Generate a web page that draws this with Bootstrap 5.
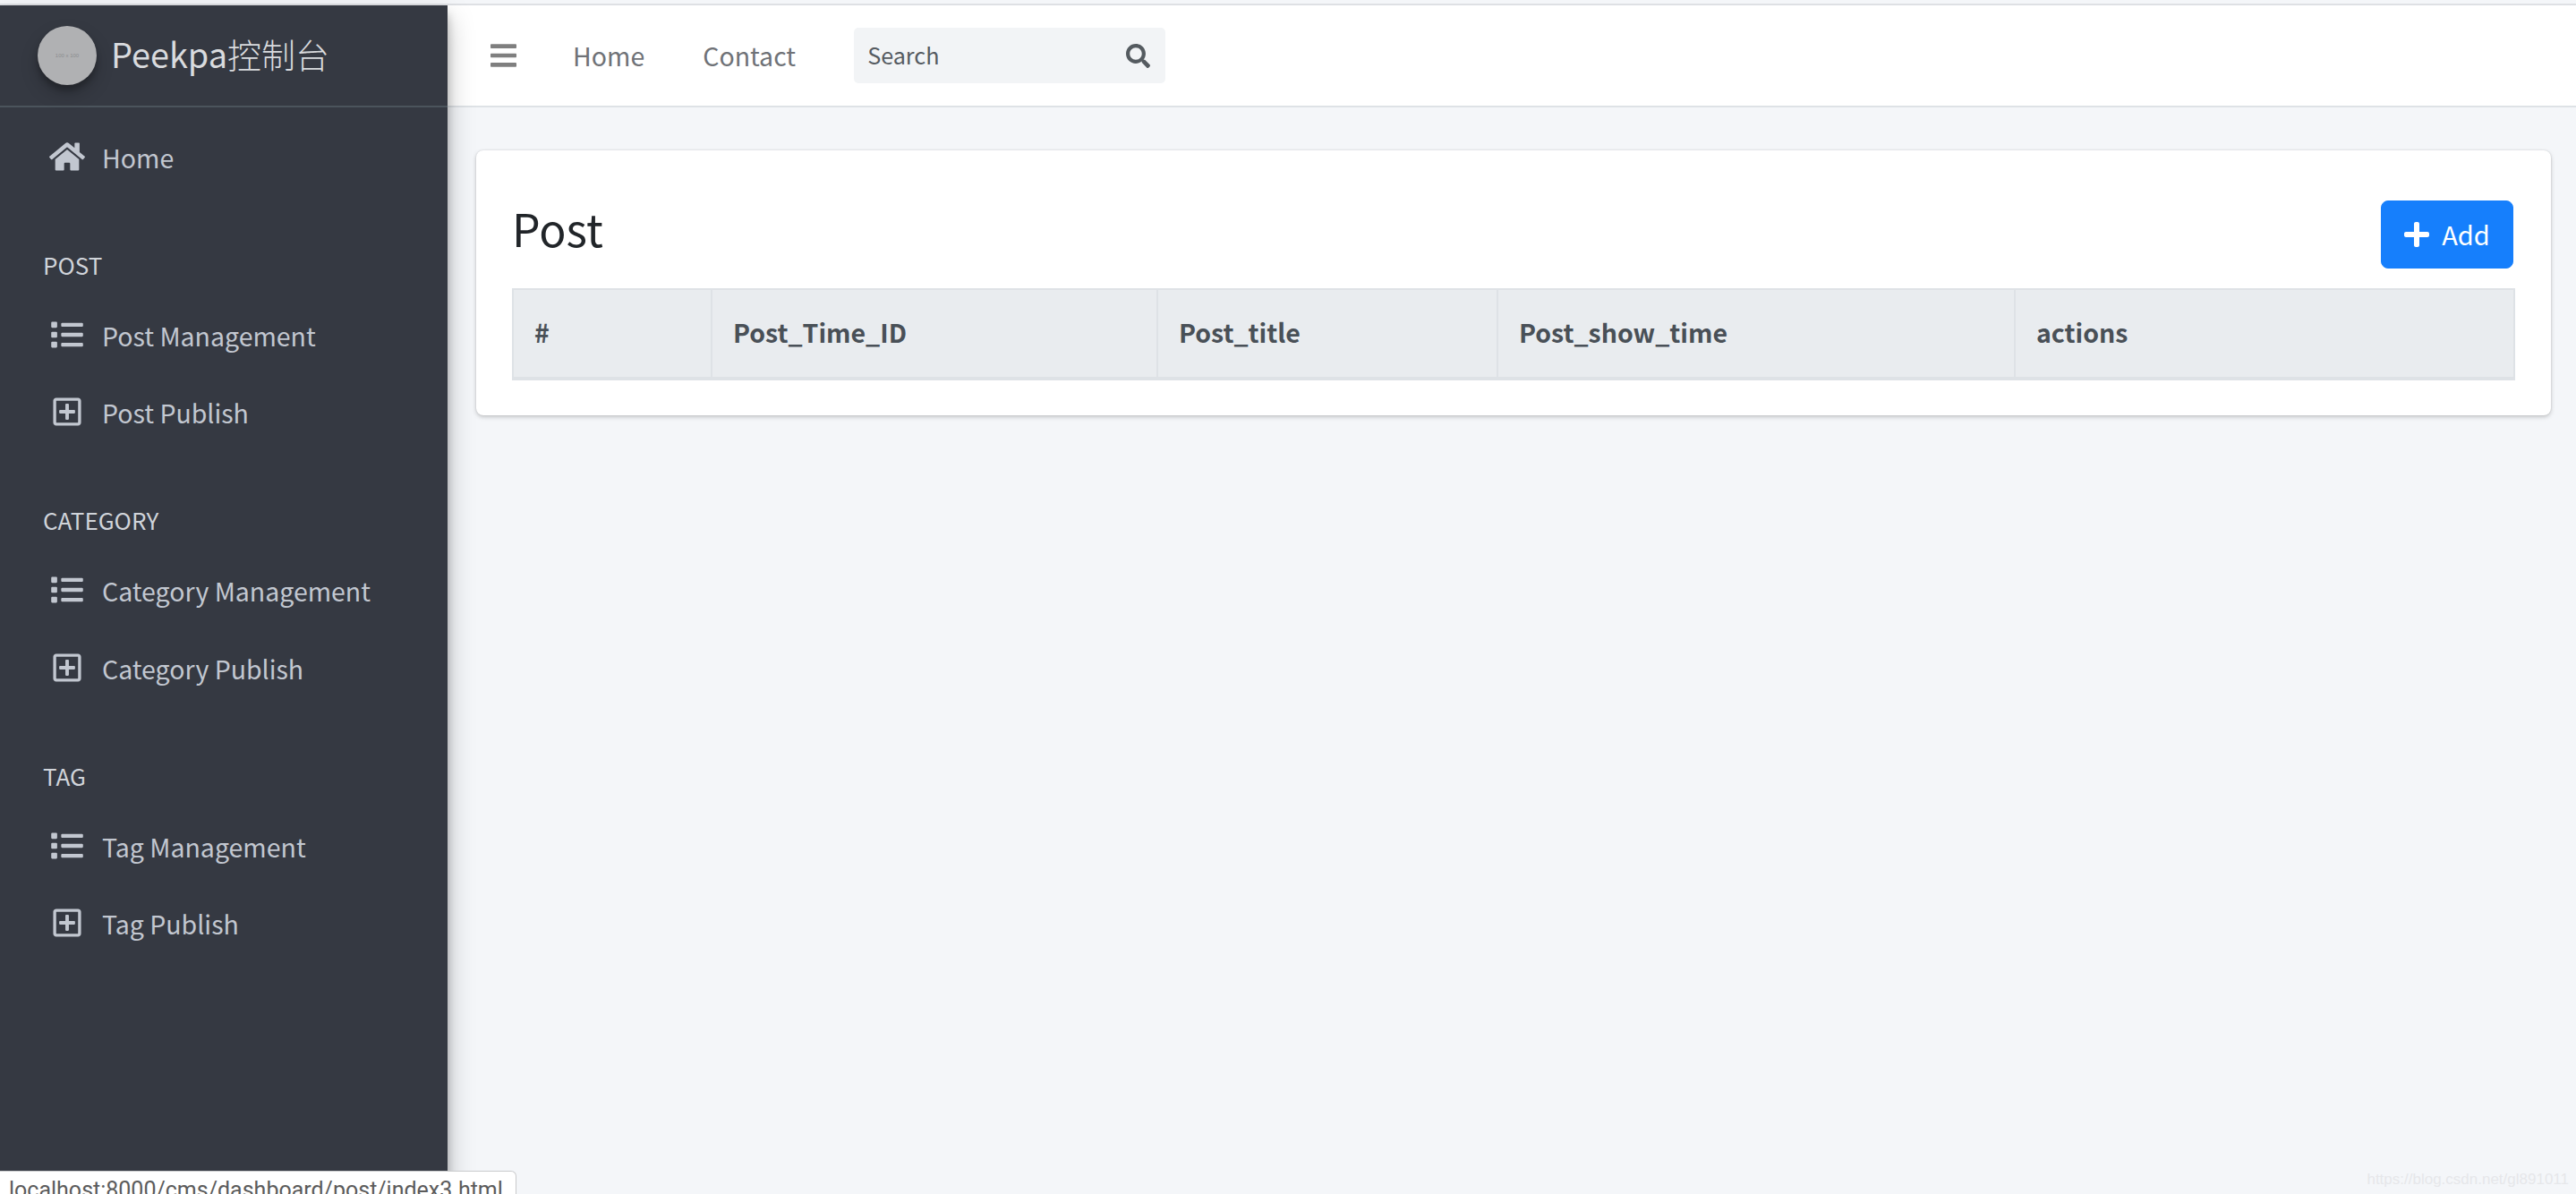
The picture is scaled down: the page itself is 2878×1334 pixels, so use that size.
<!DOCTYPE html>
<html lang="en">
<head>
<meta charset="utf-8">
<title>Peekpa</title>
<link href="https://cdn.jsdelivr.net/npm/bootstrap@5.3.0/dist/css/bootstrap.min.css" rel="stylesheet">
<style>
html,body{height:1334px;overflow:hidden}
body{font-family:"Noto Sans CJK SC","Noto Sans",sans-serif;font-size:28.5px;background:#f4f6f9;color:#212529;position:relative;padding-top:4px}
.app-shell{height:1330px;border-top:2px solid #dee0e4}
.side-panel{width:500px;background:#353942;color:#c2c7d0;box-shadow:0 14px 28px rgba(0,0,0,.25),0 10px 10px rgba(0,0,0,.22);z-index:2;flex:none}
.brand-row{height:114px;border-bottom:2px solid #4b545c;padding-left:42px;color:#d9dbde;font-size:37.9px;gap:16px}
.brand-name{margin-bottom:3px}
.brand-cjk{font-weight:300}
.avatar-disc{width:66px;height:66px;border-radius:50%;background:#b0b1b3;color:#8c8d8f;font-size:6px;font-family:"Liberation Sans",sans-serif;box-shadow:0 10px 20px rgba(0,0,0,.19),0 6px 6px rgba(0,0,0,.23)}
.side-nav{padding-top:13px}
.side-link{height:86.5px;padding:0 0 0 55px;color:#c2c7d0;font-size:28.5px}
.side-link:hover{color:#c2c7d0}
.side-ico{width:40px;height:40px;margin-right:19px;margin-bottom:3px;fill:#c2c7d0;flex:none}
.side-label{height:71px;padding:0 0 3px 48px;color:#d0d4da;font-size:26px;margin-top:41.5px}
.top-bar{height:114px;background:#fff;border-bottom:2px solid #dee2e6;padding-left:48px}
.burger{width:29px;height:34px;fill:#7f7f7f;margin-right:63px}
.top-link{color:#6f7277;font-size:28.5px;margin-right:65px}
.search-box{width:348px;height:62px;background:#f2f4f6;border-radius:5px;padding:0 17px 0 15px;font-size:25.2px;color:#555b61}
.search-ico{width:27px;height:27px;fill:#555b60}
.content-pad{padding:48px 28px 0 32px}
.post-card{height:296px;border-radius:8px;border:0;box-shadow:0 0 2px rgba(0,0,0,.13),0 2px 5px rgba(0,0,0,.2);padding:56px 40px 0}
.post-head{height:98px;padding-bottom:22px}
.post-title{font-size:50px;font-weight:400;margin:0 0 21px;line-height:1;color:#212529}
.add-btn{width:148px;height:76px;font-size:29px;background:#167ffc;border-color:#167ffc;border-radius:8px;gap:14px;padding:0;margin-right:2px}
.add-ico{width:28px;height:32px;fill:#fff}
.data-table{width:2238px;table-layout:fixed;border-color:#dee2e6;margin:0}
.data-table th{background:#e9ecef;color:#495057;font-size:28.5px;font-weight:700;height:100px;padding:0 0 2px 23px;border:2px solid #dee2e6;border-bottom-width:4px;vertical-align:middle;box-shadow:none}
.status-tip{position:absolute;left:0;bottom:-24px;width:577px;height:50px;background:#fff;border:1px solid #c9cacc;border-left:0;border-radius:0 6px 0 0;z-index:3;font-family:Roboto,sans-serif;font-size:25px;color:#5c5c5c;padding-left:10px;line-height:41px;white-space:nowrap}
.mark-text{position:absolute;right:8px;bottom:4px;font-family:"Liberation Sans",sans-serif;font-size:17px;color:#e6e7ea}
</style>
</head>
<body>
<div class="app-shell d-flex">
  <aside class="side-panel d-flex flex-column">
    <div class="brand-row d-flex align-items-center">
      <span class="avatar-disc d-flex align-items-center justify-content-center">100 x 100</span>
      <span class="brand-name">Peekpa<span class="brand-cjk">控制台</span></span>
    </div>
    <nav class="side-nav nav flex-column">
      <a class="side-link nav-link d-flex align-items-center" href="#"><svg class="side-ico" viewBox="0 0 576 512"><path d="M280.37 148.26L96 300.11V464a16 16 0 0 0 16 16l112.06-.29a16 16 0 0 0 15.92-16V368a16 16 0 0 1 16-16h64a16 16 0 0 1 16 16v95.64a16 16 0 0 0 16 16.05L464 480a16 16 0 0 0 16-16V300L295.67 148.26a12.19 12.19 0 0 0-15.3 0zM571.6 251.47L488 182.56V44.05a12 12 0 0 0-12-12h-56a12 12 0 0 0-12 12v72.61L318.47 43a48 48 0 0 0-61 0L4.34 251.47a12 12 0 0 0-1.6 16.9l25.5 31A12 12 0 0 0 45.15 301l235.22-193.74a12.19 12.19 0 0 1 15.3 0L530.9 301a12 12 0 0 0 16.9-1.6l25.5-31a12 12 0 0 0-1.7-16.93z"/></svg>Home</a>

      <div class="side-label d-flex align-items-center">POST</div>
      <a class="side-link nav-link d-flex align-items-center" href="#"><svg class="side-ico" viewBox="-32 -32 576 576"><use href="#i-list"/></svg>Post Management</a>
      <a class="side-link nav-link d-flex align-items-center" href="#"><svg class="side-ico" viewBox="-32 -32 576 576"><use href="#i-plus"/></svg>Post Publish</a>

      <div class="side-label d-flex align-items-center">CATEGORY</div>
      <a class="side-link nav-link d-flex align-items-center" href="#"><svg class="side-ico" viewBox="-32 -32 576 576"><use href="#i-list"/></svg>Category Management</a>
      <a class="side-link nav-link d-flex align-items-center" href="#"><svg class="side-ico" viewBox="-32 -32 576 576"><use href="#i-plus"/></svg>Category Publish</a>

      <div class="side-label d-flex align-items-center">TAG</div>
      <a class="side-link nav-link d-flex align-items-center" href="#"><svg class="side-ico" viewBox="-32 -32 576 576"><use href="#i-list"/></svg>Tag Management</a>
      <a class="side-link nav-link d-flex align-items-center" href="#"><svg class="side-ico" viewBox="-32 -32 576 576"><use href="#i-plus"/></svg>Tag Publish</a>
    </nav>
  </aside>
  <div class="flex-grow-1 d-flex flex-column">
    <header class="top-bar d-flex align-items-center">
      <svg class="burger" viewBox="0 0 448 512"><path d="M16 132h416c8.837 0 16-7.163 16-16V76c0-8.837-7.163-16-16-16H16C7.163 60 0 67.163 0 76v40c0 8.837 7.163 16 16 16zm0 160h416c8.837 0 16-7.163 16-16v-40c0-8.837-7.163-16-16-16H16c-8.837 0-16 7.163-16 16v40c0 8.837 7.163 16 16 16zm0 160h416c8.837 0 16-7.163 16-16v-40c0-8.837-7.163-16-16-16H16c-8.837 0-16 7.163-16 16v40c0 8.837 7.163 16 16 16z"/></svg>
      <span class="top-link">Home</span>
      <span class="top-link">Contact</span>
      <div class="search-box d-flex align-items-center justify-content-between">
        <span>Search</span>
        <svg class="search-ico" viewBox="0 0 512 512"><path d="M505 442.7L405.3 343c-4.5-4.5-10.6-7-17-7H372c27.6-35.3 44-79.7 44-128C416 93.1 322.9 0 208 0S0 93.1 0 208s93.1 208 208 208c48.3 0 92.7-16.4 128-44v16.3c0 6.4 2.5 12.5 7 17l99.7 99.7c9.4 9.4 24.6 9.4 33.9 0l28.3-28.3c9.4-9.4 9.4-24.6.1-34zM208 336c-70.7 0-128-57.2-128-128 0-70.7 57.2-128 128-128 70.7 0 128 57.2 128 128 0 70.7-57.2 128-128 128z"/></svg>
      </div>
    </header>
    <main class="content-pad">
      <div class="post-card card">
        <div class="post-head d-flex justify-content-between align-items-end">
          <h1 class="post-title">Post</h1>
          <button class="add-btn btn btn-primary d-flex align-items-center justify-content-center"><svg class="add-ico" viewBox="0 0 448 512"><path d="M416 208H272V64c0-17.67-14.33-32-32-32h-32c-17.67 0-32 14.33-32 32v144H32c-17.67 0-32 14.33-32 32v32c0 17.67 14.33 32 32 32h144v144c0 17.67 14.33 32 32 32h32c17.67 0 32-14.33 32-32V304h144c17.67 0 32-14.33 32-32v-32c0-17.67-14.33-32-32-32z"/></svg>Add</button>
        </div>
        <table class="data-table table table-bordered">
          <colgroup><col style="width:222px"><col style="width:498px"><col style="width:380px"><col style="width:578px"><col></colgroup>
          <thead><tr><th>#</th><th>Post_Time_ID</th><th>Post_title</th><th>Post_show_time</th><th>actions</th></tr></thead>
        </table>
      </div>
    </main>
  </div>
</div>
<svg class="d-none"><defs>
<path id="i-list" d="M80 368H16a16 16 0 0 0-16 16v64a16 16 0 0 0 16 16h64a16 16 0 0 0 16-16v-64a16 16 0 0 0-16-16zm0-320H16A16 16 0 0 0 0 64v64a16 16 0 0 0 16 16h64a16 16 0 0 0 16-16V64a16 16 0 0 0-16-16zm0 160H16a16 16 0 0 0-16 16v64a16 16 0 0 0 16 16h64a16 16 0 0 0 16-16v-64a16 16 0 0 0-16-16zm416 176H176a16 16 0 0 0-16 16v32a16 16 0 0 0 16 16h320a16 16 0 0 0 16-16v-32a16 16 0 0 0-16-16zm0-320H176a16 16 0 0 0-16 16v32a16 16 0 0 0 16 16h320a16 16 0 0 0 16-16V80a16 16 0 0 0-16-16zm0 160H176a16 16 0 0 0-16 16v32a16 16 0 0 0 16 16h320a16 16 0 0 0 16-16v-32a16 16 0 0 0-16-16z"/>
<path id="i-plus" transform="translate(32)" d="M352 240v32c0 6.6-5.4 12-12 12h-88v88c0 6.6-5.4 12-12 12h-32c-6.6 0-12-5.4-12-12v-88h-88c-6.6 0-12-5.4-12-12v-32c0-6.6 5.4-12 12-12h88v-88c0-6.6 5.4-12 12-12h32c6.6 0 12 5.4 12 12v88h88c6.6 0 12 5.4 12 12zm96-160v352c0 26.5-21.5 48-48 48H48c-26.5 0-48-21.5-48-48V80c0-26.5 21.5-48 48-48h352c26.5 0 48 21.5 48 48zm-48 346V86c0-3.3-2.7-6-6-6H54c-3.3 0-6 2.7-6 6v340c0 3.3 2.7 6 6 6h340c3.3 0 6-2.7 6-6z"/>
</defs></svg>
<div class="status-tip">localhost:8000/cms/dashboard/post/index3.html</div>
<div class="mark-text">https://blog.csdn.net/gl891011</div>
<script src="https://cdn.jsdelivr.net/npm/bootstrap@5.3.0/dist/js/bootstrap.bundle.min.js"></script>
</body>
</html>
